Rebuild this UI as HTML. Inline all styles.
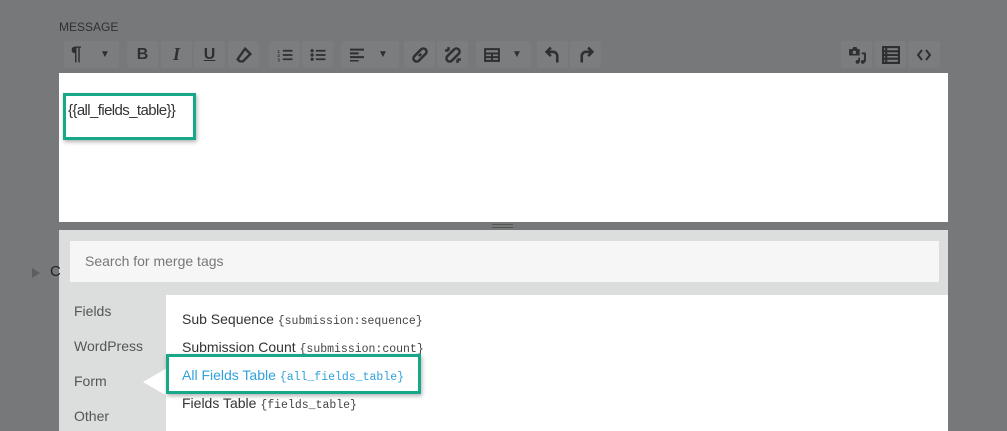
<!DOCTYPE html>
<html style="width:1007px;height:431px;overflow:hidden"><head><meta charset="utf-8"><style>
*{margin:0;padding:0;box-sizing:border-box}
body{width:1007px;height:431px;background:#777879;position:relative;overflow:hidden;font-family:"Liberation Sans",sans-serif}
.a{position:absolute}
.btn{position:absolute;top:41px;height:27px;background:#7c7d7e;border-radius:3px;color:#2e2f30;font-weight:bold;font-size:16px;text-align:center;line-height:27px}
.btn svg{position:absolute;left:50%;top:50%;transform:translate(-50%,-50%)}
.tab{position:absolute;left:59px;width:107px;height:33px;background:#dcdddd;color:#555;font-size:14px;line-height:33px;padding-left:15px}
.it{position:absolute;left:182px;font-size:14px;color:#333}
.it code{font-family:"Liberation Mono",monospace;font-size:11.5px;color:#444}
</style></head><body>
<div class="a" style="left:59px;top:20px;font-size:12px;color:#2f3030">MESSAGE</div>

<div class="btn" style="left:64px;width:55px;text-align:left;padding-left:7px;font-size:19px">¶<span style="position:absolute;left:36px;top:0;font-size:10px">▼</span></div>
<div class="btn" style="left:127px;width:31px">B</div>
<div class="btn" style="left:161px;width:31px;font-style:italic;font-family:'Liberation Serif',serif;font-size:18px">I</div>
<div class="btn" style="left:194px;width:31px;text-decoration:underline">U</div>
<div class="btn" style="left:228px;width:31px"><svg width="17" height="17" viewBox="0 0 16 16"><path d="M9 2l5 5-7 7H4l-2-2z" fill="none" stroke="#2e2f30" stroke-width="2.2"/></svg></div>
<div class="btn" style="left:269px;width:31px"><svg width="15" height="13" viewBox="0 0 14 12"><path d="M5 2h9M5 6h9M5 10h9" stroke="#2e2f30" stroke-width="1.6"/><text x="0" y="4" font-size="4" fill="#2e2f30">1</text><text x="0" y="8" font-size="4" fill="#2e2f30">2</text><text x="0" y="12" font-size="4" fill="#2e2f30">3</text></svg></div>
<div class="btn" style="left:302px;width:31px"><svg width="15" height="13" viewBox="0 0 14 12"><path d="M5 2h9M5 6h9M5 10h9" stroke="#2e2f30" stroke-width="1.6"/><circle cx="1.5" cy="2" r="1.5" fill="#2e2f30"/><circle cx="1.5" cy="6" r="1.5" fill="#2e2f30"/><circle cx="1.5" cy="10" r="1.5" fill="#2e2f30"/></svg></div>
<div class="btn" style="left:341px;width:58px"><svg style="left:16px" width="14" height="13" viewBox="0 0 13 12"><path d="M0 1h13M0 4.5h8M0 8h13M0 11.5h8" stroke="#2e2f30" stroke-width="1.8"/></svg><span style="position:absolute;left:37px;font-size:10px">▼</span></div>
<div class="btn" style="left:404px;width:31px"><svg width="18" height="18" viewBox="0 0 16 16"><path d="M7 9l2-2M6 6l3-3a2.5 2.5 0 014 4l-3 3M10 10l-3 3a2.5 2.5 0 01-4-4l3-3" fill="none" stroke="#2e2f30" stroke-width="2.2"/></svg></div>
<div class="btn" style="left:437px;width:31px"><svg width="18" height="18" viewBox="0 0 16 16"><path d="M6 6l3-3a2.5 2.5 0 014 4l-3 3M10 10l-3 3a2.5 2.5 0 01-4-4l3-3M1 4h3M4 1v3M12 15v-3M15 12h-3" fill="none" stroke="#2e2f30" stroke-width="2.2"/></svg></div>
<div class="btn" style="left:476px;width:55px"><svg style="left:16px" width="16" height="14" viewBox="0 0 15 13"><path d="M1 1h13v11H1zM1 5h13M1 8.5h13M7.5 5v7" fill="none" stroke="#2e2f30" stroke-width="1.8"/></svg><span style="position:absolute;left:36px;font-size:10px">▼</span></div>
<div class="btn" style="left:537px;width:31px"><svg width="17" height="17" viewBox="0 0 16 16"><path d="M12 15V9a4 4 0 00-4-4H3M6 1L2 5l4 4" fill="none" stroke="#2e2f30" stroke-width="2.4"/></svg></div>
<div class="btn" style="left:570px;width:31px"><svg width="17" height="17" viewBox="0 0 16 16"><path d="M4 15V9a4 4 0 014-4h5M10 1l4 4-4 4" fill="none" stroke="#2e2f30" stroke-width="2.4"/></svg></div>
<div class="btn" style="left:841px;width:31px"><svg width="18" height="18" viewBox="0 0 17 17"><path d="M1 3h3l1-2h3l1 2h2v6H1z" fill="#2e2f30"/><circle cx="6" cy="6" r="1.6" fill="#7c7d7e"/><path d="M13 7h3v8" stroke="#2e2f30" stroke-width="1.8" fill="none"/><circle cx="14" cy="15" r="1.8" fill="#2e2f30"/><circle cx="9" cy="15" r="1.8" fill="#2e2f30"/><path d="M10.5 11v4" stroke="#2e2f30" stroke-width="1.6"/></svg></div>
<div class="btn" style="left:875px;width:31px"><svg width="18" height="18" viewBox="0 0 17 17"><path d="M1 1h15v15H1zM1 5h15M1 8.5h15M1 12h15M4 1v15" fill="none" stroke="#2e2f30" stroke-width="2"/></svg></div>
<div class="btn" style="left:908px;width:32px"><svg width="14" height="12" viewBox="0 0 14 12"><path d="M5 1L1 6l4 5M9 1l4 5-4 5" fill="none" stroke="#2e2f30" stroke-width="2"/></svg></div>

<div class="a" style="left:59px;top:73px;width:889px;height:149px;background:#fff"></div>
<div class="a" style="left:68px;top:102px;font-size:15px;color:#333;letter-spacing:-0.6px">{{all_fields_table}}</div>
<div class="a" style="left:63px;top:93px;width:133px;height:47px;border:3px solid #17a889;box-shadow:1px 2px 4px rgba(0,0,0,.3)"></div>

<div class="a" style="left:492px;top:224px;width:21px;height:4px;border-top:1px solid #555;border-bottom:1px solid #555"></div>
<div class="a" style="left:59px;top:230px;width:889px;height:201px;background:#dcdddd"></div>
<div class="a" style="left:70px;top:241px;width:869px;height:41px;background:#f6f6f6;font-size:14px;color:#777;line-height:41px;padding-left:15px">Search for merge tags</div>
<div class="a" style="left:32px;top:268px;width:0;height:0;border-left:8px solid #5d5e5f;border-top:5px solid transparent;border-bottom:5px solid transparent"></div>
<div class="a" style="left:50px;top:263px;font-size:15px;color:#222">C</div>

<div class="tab" style="top:295px">Fields</div>
<div class="tab" style="top:330px">WordPress</div>
<div class="tab" style="top:365px">Form</div>
<div class="tab" style="top:400px;height:31px">Other</div>
<div class="a" style="left:166px;top:295px;width:782px;height:136px;background:#fff"></div>
<div class="a" style="left:143px;top:368px;width:0;height:0;border-right:24px solid #fff;border-top:14px solid transparent;border-bottom:14px solid transparent"></div>

<div class="it" style="top:311px">Sub Sequence <code>{submission:sequence}</code></div>
<div class="it" style="top:339px">Submission Count <code>{submission:count}</code></div>
<div class="it" style="top:367px;color:#2ea2dc">All Fields Table <code style="color:#2ea2dc">{all_fields_table}</code></div>
<div class="it" style="top:395px">Fields Table <code>{fields_table}</code></div>
<div class="a" style="left:166px;top:354px;width:255px;height:40px;border:3px solid #17a889;box-shadow:1px 2px 4px rgba(0,0,0,.3)"></div>
</body></html>
